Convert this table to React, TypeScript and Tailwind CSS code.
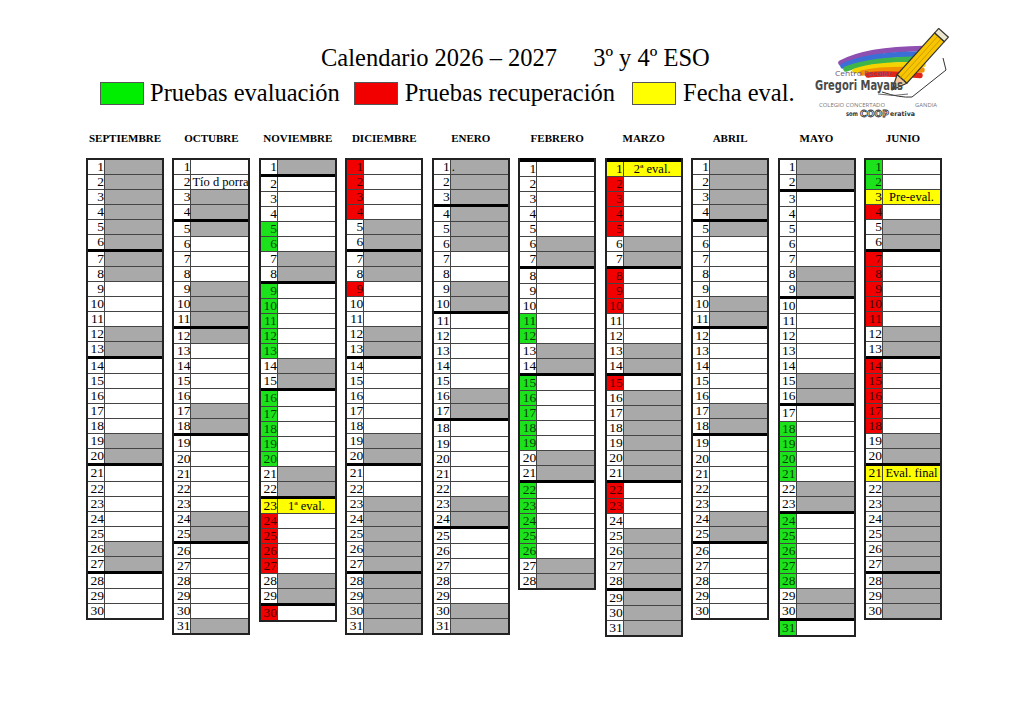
import React from "react";

type Month = { name: string; year: number; month: number; code: string };

// w = lectivo, g = festivo/no lectivo, v = prueba evaluación, r = recuperación, y = fecha eval.
const MONTHS: Month[] = [
  { name: "SEPTIEMBRE", year: 2026, month: 8, code: "gggggggg" + "www" + "gg" + "wwwww" + "gg" + "wwwww" + "gg" + "www" },
  { name: "OCTUBRE", year: 2026, month: 9, code: "ww" + "ggg" + "www" + "gggg" + "wwww" + "gg" + "wwwww" + "gg" + "wwwww" + "g" },
  { name: "NOVIEMBRE", year: 2026, month: 10, code: "g" + "www" + "vv" + "gg" + "vvvvv" + "gg" + "vvvvv" + "gg" + "y" + "rrrr" + "gg" + "r" },
  { name: "DICIEMBRE", year: 2026, month: 11, code: "rrrr" + "gggg" + "r" + "ww" + "gg" + "wwwww" + "gg" + "ww" + "ggggggggg" },
  { name: "ENERO", year: 2027, month: 0, code: "gggggg" + "ww" + "gg" + "wwwww" + "gg" + "wwwww" + "gg" + "wwwww" + "gg" },
  { name: "FEBRERO", year: 2027, month: 1, code: "wwwww" + "gg" + "www" + "vv" + "gg" + "vvvvv" + "gg" + "vvvvv" + "gg" },
  { name: "MARZO", year: 2027, month: 2, code: "y" + "rrrr" + "gg" + "rrr" + "ww" + "gg" + "r" + "gggggg" + "rr" + "w" + "ggggggg" },
  { name: "ABRIL", year: 2027, month: 3, code: "ggggg" + "wwww" + "gg" + "wwwww" + "gg" + "wwwww" + "gg" + "wwwww" },
  { name: "MAYO", year: 2027, month: 4, code: "gg" + "wwwww" + "gg" + "wwwww" + "gg" + "w" + "vvvv" + "gg" + "vvvvv" + "gg" + "v" },
  { name: "JUNIO", year: 2027, month: 5, code: "vv" + "y" + "r" + "gg" + "rrrrr" + "gg" + "rrrrr" + "gg" + "y" + "ggggggggg" },
];

const LABELS: Record<string, string> = {
  "9-2": "Tío d porra",
  "10-23": "1ª eval.",
  "0-1": ".",
  "2-1": "2ª eval.",
  "5-3": "Pre-eval.",
  "5-21": "Eval. final",
};

function MonthColumn({ name, year, month, code }: Month) {
  return (
    <div className="w-[78px]">
      <div className="h-[14px] text-center text-[11px] font-bold leading-[14px]">{name}</div>
      <div className="mt-[13px] border-x-2 border-b-2 border-[#222]">
        {code.split("").map((s, i) => {
          const d = i + 1;
          const monday = new Date(year, month, d).getDay() === 1;
          let rowCls;
          if (i === 0) rowCls = monday ? "h-[18px] border-t-[4px] border-t-black" : "h-[16px] border-t-2 border-t-[#222]";
          else rowCls = monday ? "h-[17.2px] border-t-[3px] border-t-black" : "h-[15px] border-t border-t-[#444]";
          const dayBg =
            s === "v" ? "bg-[#1be21b] text-black/75" : s === "r" ? "bg-[#f20000] text-black/75" : s === "y" ? "bg-[#ffff00]" : "bg-white";
          const bodyBg = s === "g" ? "bg-[#a9a9a9]" : s === "y" ? "bg-[#ffff00]" : "bg-white";
          const label = LABELS[`${month}-${d}`];
          return (
            <div key={d} className={`flex ${rowCls}`}>
              <div className={`w-[17px] shrink-0 overflow-visible border-r border-[#444] text-right text-[13.5px] leading-[14px] ${dayBg}`}>
                {d}
              </div>
              <div
                className={`flex-1 overflow-hidden whitespace-nowrap text-[12.5px] leading-[14px] ${bodyBg} ${
                  s === "y" ? "text-center" : "pl-[1px]"
                }`}
              >
                {label}
              </div>
            </div>
          );
        })}
      </div>
    </div>
  );
}

function Logo() {
  return (
    <svg width="140" height="100" viewBox="0 0 140 100">
      <g fill="none" strokeLinecap="round" strokeWidth="5.5">
        <path d="M29,35 C45,26 75,21 112,20.5" stroke="#8e4fb0" />
        <path d="M31,38 C48,30 78,26 112,26" stroke="#3a6fd8" />
        <path d="M34,41 C52,34 80,31 112,31" stroke="#3db54a" />
        <path d="M43,43 C58,38 82,36 111,36.5" stroke="#f4d400" />
        <path d="M50,45 C64,42 85,41 110,42" stroke="#f39200" />
        <path d="M56,47 C70,45 88,46 108,47.5" stroke="#e2231a" />
      </g>
      <path d="M70,64 Q88,70 100,69 L134,42 L131,30" fill="none" stroke="#333" strokeWidth="1" />
      <g transform="translate(80,62) rotate(-48)">
        <polygon points="0,0 15,-6.5 15,6.5" fill="#f3c79a" stroke="#333" strokeWidth="1.2" strokeLinejoin="round" />
        <polygon points="0,0 5,-2.2 5,2.2" fill="#444" />
        <rect x="15" y="-6.5" width="56" height="13" fill="#f7c600" stroke="#333" strokeWidth="1.2" />
        <line x1="15" y1="-2" x2="71" y2="-2" stroke="#c89600" strokeWidth="0.8" />
        <line x1="15" y1="2.2" x2="71" y2="2.2" stroke="#c89600" strokeWidth="0.8" />
        <rect x="71" y="-6.5" width="6" height="13" fill="#ece6cc" stroke="#333" strokeWidth="1.2" />
      </g>
      <text x="23" y="48" fontSize="7.5" fill="#6d5a7a" fontFamily="'Open Sans', sans-serif" textLength="57" lengthAdjust="spacingAndGlyphs">
        Centro Escolar
      </text>
      <text
        x="3"
        y="62"
        fontSize="14.5"
        fontWeight="bold"
        fill="#4a4a4a"
        fontFamily="'DejaVu Sans', sans-serif"
        textLength="88"
        lengthAdjust="spacingAndGlyphs"
      >
        Gregori Mayans
      </text>
      <path d="M66,66 Q82,69 96,66" fill="none" stroke="#444" strokeWidth="0.8" />
      <text x="7" y="79" fontSize="5.5" fill="#777" fontFamily="'Open Sans', sans-serif" textLength="66" lengthAdjust="spacingAndGlyphs">
        COLEGIO CONCERTADO
      </text>
      <text x="103" y="79" fontSize="6" fill="#777" fontFamily="'Open Sans', sans-serif" textLength="22" lengthAdjust="spacingAndGlyphs">
        GANDIA
      </text>
      <text x="34" y="88" fontSize="6.5" fontWeight="bold" fill="#333" fontFamily="'DejaVu Sans', sans-serif" textLength="12" lengthAdjust="spacingAndGlyphs">
        som
      </text>
      <text
        x="48"
        y="89"
        fontSize="9"
        fontWeight="bold"
        fill="#fff"
        stroke="#333"
        strokeWidth="0.8"
        fontFamily="'DejaVu Sans', sans-serif"
        textLength="29"
        lengthAdjust="spacingAndGlyphs"
      >
        COOP
      </text>
      <text x="78" y="88" fontSize="6.5" fontWeight="bold" fill="#333" fontFamily="'DejaVu Sans', sans-serif" textLength="25" lengthAdjust="spacingAndGlyphs">
        erativa
      </text>
    </svg>
  );
}

function LegendBox({ color }: { color: string }) {
  return <span className={`inline-block h-[23px] w-[44px] shrink-0 border border-[#555] ${color}`} />;
}

export default function App() {
  return (
    <div className="h-[728px] w-[1030px] bg-white font-['Liberation_Serif',serif] text-black">
      <div className="flex">
        <div className="w-[812px] pt-[44px]">
          <div className="whitespace-pre pl-[321px] text-[24.5px] leading-[28px]">
            Calendario 2026 – 2027<span className="ml-[36px]">3º y 4º ESO</span>
          </div>
          <div className="mt-[7px] flex h-[28px] items-center pl-[100px] text-[24.5px] leading-[28px]">
            <LegendBox color="bg-[#00ee00]" />
            <span className="ml-[6px] whitespace-nowrap">Pruebas evaluación</span>
            <span className="ml-[14px]" />
            <LegendBox color="bg-[#f20000]" />
            <span className="ml-[7px] whitespace-nowrap">Pruebas recuperación</span>
            <span className="ml-[17px]" />
            <LegendBox color="bg-[#ffff00]" />
            <span className="ml-[7px] whitespace-nowrap">Fecha eval.</span>
          </div>
        </div>
        <div className="mt-[28px] h-[100px] w-[140px]">
          <Logo />
        </div>
      </div>
      <div className="mt-[3px] flex gap-[8.44px] pl-[86px]">
        {MONTHS.map((m) => (
          <MonthColumn key={m.name} {...m} />
        ))}
      </div>
    </div>
  );
}
